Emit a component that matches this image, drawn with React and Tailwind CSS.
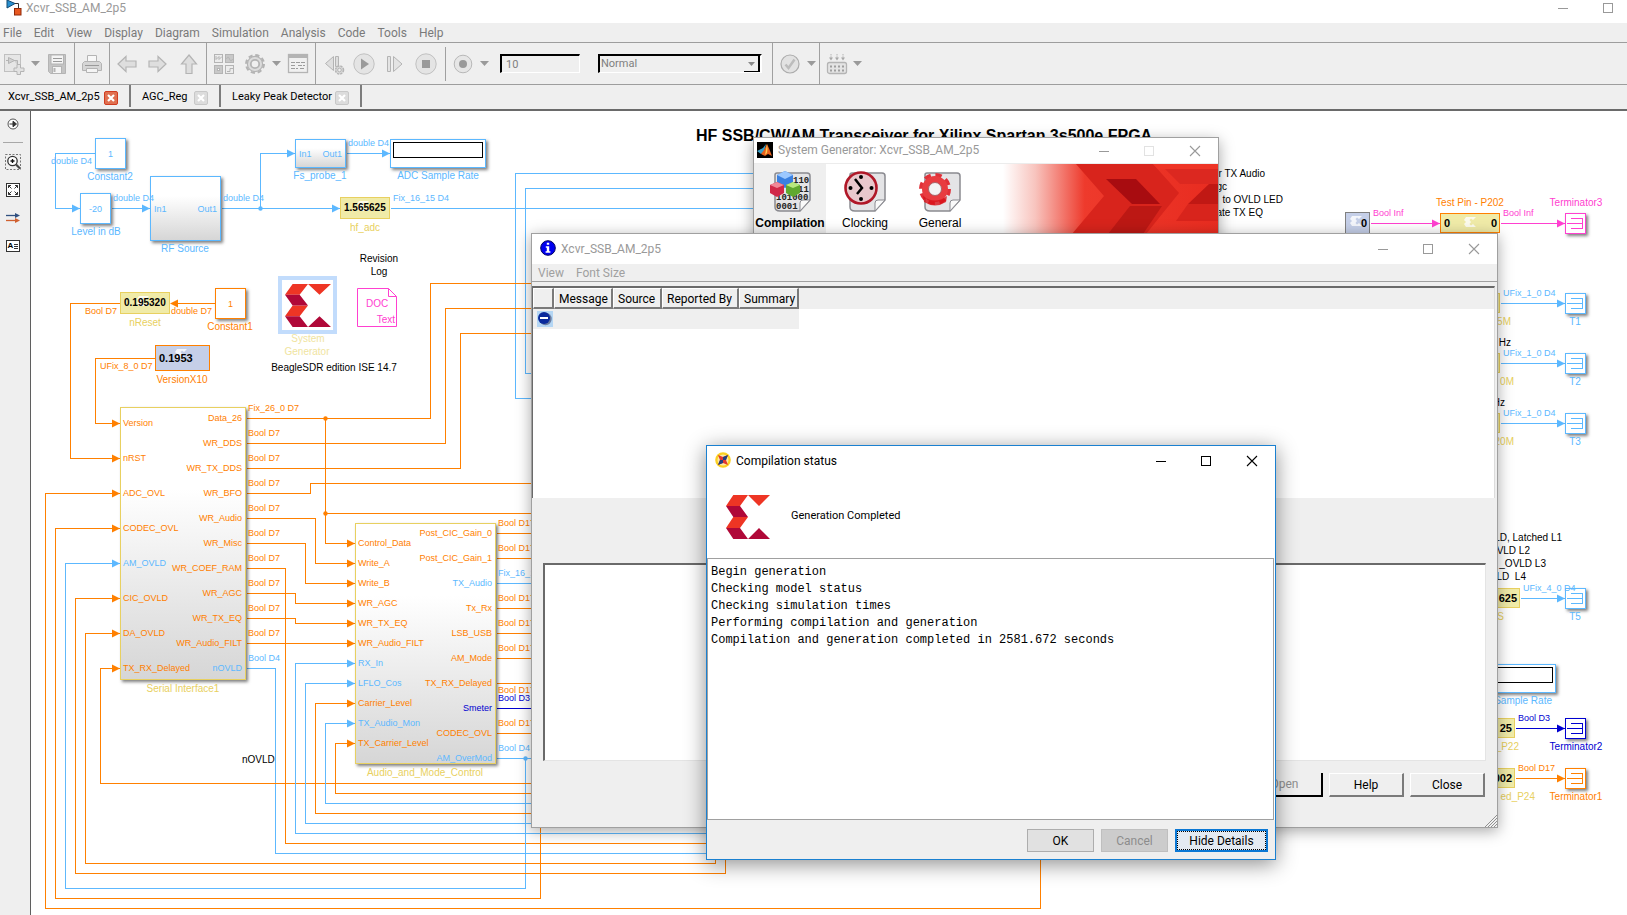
import React from "react";

/* ---------- palette ---------- */
const BLUE = "#5cb8ff";
const ORANGE = "#ff8000";
const YELLOW = "#e8d060";
const PALE = "#f0e4a0";
const PINK = "#ff40d0";
const NAVY = "#0000d0";
const BLACK = "#000000";

/* Diagram coordinates are window coordinates; the canvas starts here. */
const OX = 31;
const OY = 111;

/* ---------- small glyphs ---------- */
function XilinxMark({ className }) {
  return (
    <svg viewBox="0 0 44 44" preserveAspectRatio="none" className={className} aria-hidden="true">
      <path fill="#ee3524" d="M7.3 0H22L14 11H0zM7.3 22H22L14 33H0zM22 0H44L33 11z" />
      <path fill="#b00838" d="M0 11H14L22 22H7.3zM0 33H14L22 44H7.3zM33 33L44 44H22z" />
    </svg>
  );
}

function Caret() {
  return (
    <svg viewBox="0 0 9 5" className="h-[5px] w-[9px] shrink-0" aria-hidden="true">
      <path d="M0 0H9L4.5 5z" fill="#9a9a9a" />
    </svg>
  );
}

function CloseGlyph({ active }) {
  return (
    <svg viewBox="0 0 14 14" className="size-[14px]" aria-hidden="true">
      <rect x=".5" y=".5" width="13" height="13" rx="1.5" fill={active ? "#e07050" : "#dcdcdc"} stroke={active ? "#d03c20" : "#c8c8c8"} />
      <path d="M4 4l6 6M10 4l-6 6" stroke="#fff" strokeWidth="2.2" />
    </svg>
  );
}

function Minus({ color }) {
  return (
    <svg viewBox="0 0 12 12" className="size-3" aria-hidden="true" shapeRendering="crispEdges">
      <path d="M1 6.5h10" stroke={color} />
    </svg>
  );
}
function Box({ color }) {
  return (
    <svg viewBox="0 0 12 12" className="size-3" aria-hidden="true" shapeRendering="crispEdges">
      <rect x="1.5" y="1.5" width="9" height="9" fill="none" stroke={color} />
    </svg>
  );
}
function Cross({ color }) {
  return (
    <svg viewBox="0 0 12 12" className="size-3" aria-hidden="true">
      <path d="M1 1l10 10M11 1L1 11" stroke={color} strokeWidth="1.1" />
    </svg>
  );
}

function ToolIcon({ size = "size-[22px]", children }) {
  return (
    <svg viewBox="0 0 22 22" className={`${size} shrink-0`} fill="none" stroke="#b4b4b4" aria-hidden="true">
      {children}
    </svg>
  );
}

/* ---------- toolbar ---------- */
function ToolButton({ label, className = "", children }) {
  return (
    <button type="button" aria-label={label} title={label} className={`flex shrink-0 items-center justify-center ${className}`}>
      {children}
    </button>
  );
}

function Toolbar() {
  return (
    <div className="flex h-[42px] items-stretch border-b border-[#9d9d9d] bg-[#efefef]">
      <div className="flex w-[75px] items-center border-r border-[#a0a0a0] pl-[3px]">
        <ToolButton label="New model">
          <ToolIcon>
            <rect x="1.5" y="1.5" width="16" height="17" fill="#e6e6e6" stroke="#c0c0c0" />
            <path d="M3 7.5h3M5.5 4.5v6l6-3zM11 7.5h3.500v5" fill="#d0d0d0" />
            <path d="M14 11.500h3.500v3.500h3.500v3.500h-3.500v3h-3.500v-3h-3v-3.500h3z" fill="#e2e2e2" />
          </ToolIcon>
        </ToolButton>
        <ToolButton label="New options" className="ml-[6px]"><Caret /></ToolButton>
        <ToolButton label="Save" className="ml-[6px]">
          <ToolIcon>
            <path d="M2.500 1.500h17v19h-15l-2-2z" fill="#c4c4c4" />
            <rect x="5" y="2" width="12.500" height="9" fill="#f4f4f4" stroke="#b4b4b4" />
            <path d="M7 5.500h9M7 8.500h9" stroke="#9a9a9a" />
            <rect x="6.500" y="13.500" width="9" height="7" fill="#f4f4f4" />
            <path d="M8.500 15v4" strokeWidth="2" />
          </ToolIcon>
        </ToolButton>
      </div>
      <div className="flex w-[35px] items-center border-r border-[#a0a0a0] pl-[6px]">
        <ToolButton label="Print">
          <ToolIcon>
            <path d="M6.500 2.500h9v6h-9z" fill="#f8f8f8" />
            <path d="M3.500 8.500h15l2 2v7h-19v-7z" fill="#d6d6d6" />
            <path d="M5.500 15.500h11v4h-11z" fill="#f4f4f4" />
            <path d="M4 12.500h14" stroke="#9a9a9a" />
          </ToolIcon>
        </ToolButton>
      </div>
      <div className="flex w-[97px] items-center gap-[9px] border-r border-[#a0a0a0] pl-[6px]">
        <ToolButton label="Back">
          <ToolIcon><path d="M2 11l8-7.500v4.500h10v6H10v4.500z" fill="#dedede" strokeWidth="1.200" /></ToolIcon>
        </ToolButton>
        <ToolButton label="Forward">
          <ToolIcon><path d="M19 11l-8-7.500v4.500H2v6h9v4.500z" fill="#dedede" strokeWidth="1.200" /></ToolIcon>
        </ToolButton>
        <ToolButton label="Up to parent">
          <ToolIcon><path d="M11 2l7.500 9H14v9.500H8V11H3.500z" fill="#dedede" strokeWidth="1.200" /></ToolIcon>
        </ToolButton>
      </div>
      <div className="flex w-[109px] items-center border-r border-[#a0a0a0] pl-[6px]">
        <ToolButton label="Library browser">
          <ToolIcon>
            <rect x="1.500" y="1.500" width="8" height="8" fill="#ececec" />
            <rect x="12.500" y="1.500" width="8" height="8" fill="#c8c8c8" />
            <rect x="1.500" y="12.500" width="8" height="8" fill="#c8c8c8" />
            <rect x="12.500" y="12.500" width="8" height="8" fill="#ececec" />
            <path d="M3 3v3.500l3-3v3l3-3M13.500 6q1.500-4 3 0t3 0M14 18.500h3v-3h3" />
            <rect x="4.500" y="15.500" width="2" height="2" fill="#fff" />
          </ToolIcon>
        </ToolButton>
        <ToolButton label="Configuration parameters" className="ml-[9px]">
          <ToolIcon>
            <circle cx="11" cy="11" r="8.900" strokeWidth="2.200" strokeDasharray="4.200 2.790" />
            <circle cx="11" cy="11" r="7.600" fill="#dcdcdc" strokeWidth="1.200" />
            <circle cx="11" cy="11" r="4.200" fill="#efefef" strokeWidth="1.800" />
          </ToolIcon>
        </ToolButton>
        <ToolButton label="Configuration options" className="ml-[6px]"><Caret /></ToolButton>
        <ToolButton label="Model explorer" className="ml-[6px]">
          <ToolIcon>
            <rect x="1.500" y="1.500" width="19" height="18" fill="#f0f0f0" strokeWidth="1.300" />
            <path d="M2 3.500h18" strokeWidth="3" />
            <path d="M4 9.500h14M4 12.500h5m2 0h7M4 15.500h7m2 0h5" stroke="#9c9c9c" strokeDasharray="4 1" />
          </ToolIcon>
        </ToolButton>
      </div>
      <div className="flex flex-none items-center border-r border-[#a0a0a0] pl-2">
        <ToolButton label="Step back">
          <ToolIcon>
            <path d="M9.500 3.500v14L1.500 10.500zM11.500 3.500h3v10h-3z" fill="#dedede" />
            <circle cx="15.500" cy="17" r="4" fill="#d8d8d8" strokeWidth="1.500" strokeDasharray="2.200 1" />
            <circle cx="15.500" cy="17" r="1.800" fill="#f0f0f0" />
          </ToolIcon>
        </ToolButton>
        <ToolButton label="Run" className="ml-[7px]">
          <ToolIcon>
            <circle cx="11" cy="11" r="10.200" fill="#e4e4e4" stroke="#c0c0c0" />
            <path d="M8 5.500v11l8-5.500z" fill="#9a9a9a" stroke="none" />
          </ToolIcon>
        </ToolButton>
        <ToolButton label="Step forward" className="ml-[10px]">
          <ToolIcon>
            <path d="M2.500 3.500h3v15h-3zM8.500 3.500v15l8.500-7.500z" fill="#e4e4e4" />
          </ToolIcon>
        </ToolButton>
        <ToolButton label="Stop" className="ml-2">
          <ToolIcon>
            <circle cx="11" cy="11" r="10.200" fill="#e4e4e4" stroke="#c0c0c0" />
            <rect x="7" y="7" width="8" height="8" fill="#9a9a9a" stroke="none" />
          </ToolIcon>
        </ToolButton>
        <div className="ml-2 h-[34px] w-px bg-[#a0a0a0]" />
        <ToolButton label="Record" className="ml-[6px]">
          <ToolIcon>
            <circle cx="11" cy="11" r="8.800" fill="#e6e6e6" stroke="#b8b8b8" />
            <circle cx="11" cy="11" r="4" fill="#9a9a9a" stroke="none" />
          </ToolIcon>
        </ToolButton>
        <ToolButton label="Record options" className="ml-[6px]"><Caret /></ToolButton>
        <input
          aria-label="Stop time"
          defaultValue="10"
          className="ml-[11px] h-[19px] w-[80px] border-t-2 border-r border-b border-l-2 border-t-black border-r-white border-b-white border-l-black bg-[#efefef] pl-1 text-[11px] text-[#808080]"
        />
        <div className="relative ml-[18px] h-[19px] w-[164px]">
          <select
            aria-label="Simulation mode"
            className="block h-full w-full appearance-none border-t-2 border-r-2 border-b border-l-2 border-t-black border-r-white border-b-white border-l-black bg-[#efefef] pl-px text-[11px] leading-4 text-[#808080]"
          >
            <option>Normal</option>
          </select>
          <span className="pointer-events-none absolute top-[2px] right-[2px] flex h-[16px] w-[16px] items-center justify-center border-r-2 border-b border-black bg-[#efefef]">
            <svg viewBox="0 0 7 4" className="h-1 w-[7px]" aria-hidden="true"><path d="M0 0h7L3.500 4z" fill="#8a8a8a" /></svg>
          </span>
        </div>
        <div className="w-[10px]" />
      </div>
      <div className="flex w-[47px] items-center border-r border-[#a0a0a0] pl-[6px]">
        <ToolButton label="Check model">
          <ToolIcon>
            <circle cx="11" cy="11" r="9" fill="#e2e2e2" stroke="#acacac" strokeWidth="1.200" />
            <path d="M6.500 11.500l3 3.500 6-8.500" stroke="#bcbcbc" strokeWidth="2.500" />
          </ToolIcon>
        </ToolButton>
        <ToolButton label="Check options" className="ml-[6px]"><Caret /></ToolButton>
      </div>
      <div className="flex items-center pl-[6px]">
        <ToolButton label="Build model">
          <ToolIcon>
            <path d="M5 1v4M11 1v4M17 1v4" strokeDasharray="1.500 .8" />
            <path d="M3 4.500h4l-2 3zM9 4.500h4l-2 3zM15 4.500h4l-2 3z" fill="#a8a8a8" stroke="none" />
            <rect x="1.500" y="9.500" width="19" height="11" rx="2" fill="#e4e4e4" strokeWidth="1.300" />
            <path d="M4 13.500h14M4 17.500h14" stroke="#9e9e9e" strokeWidth="2" strokeDasharray="2 2" />
          </ToolIcon>
        </ToolButton>
        <ToolButton label="Build options" className="ml-[5px]"><Caret /></ToolButton>
      </div>
    </div>
  );
}

/* ---------- diagram ---------- */
const WIRES = [
  [BLUE, "95,153 55,153 55,208 80,208", "r"],
  [BLUE, "111,208 150,208", "r"],
  [BLUE, "221,208 340,208", "r"],
  [BLUE, "260,208 260,153 295,153", "r"],
  [BLUE, "346,153 390,153", "r"],
  [BLUE, "390,208 760,208"],
  [BLUE, "760,173 515,173 515,398 540,398"],
  [BLUE, "760,188 525,188 525,373 540,373"],
  [ORANGE, "215,303 170,303", "l"],
  [ORANGE, "120,303 70,303 70,458 120,458", "r"],
  [ORANGE, "155,358 95,358 95,423 120,423", "r"],
  [ORANGE, "246,418 430,418 430,283 540,283"],
  [ORANGE, "246,443 445,443 445,308 540,308"],
  [ORANGE, "246,468 460,468 460,333 540,333"],
  [ORANGE, "246,493 310,493 310,483 540,483"],
  [ORANGE, "325,418 325,543 355,543", "r"],
  [ORANGE, "325,513 540,513"],
  [ORANGE, "246,518 315,518 315,563 355,563", "r"],
  [ORANGE, "246,543 305,543 305,583 355,583", "r"],
  [ORANGE, "246,568 285,568 285,843 720,843"],
  [ORANGE, "246,593 295,593 295,603 355,603", "r"],
  [ORANGE, "246,618 295,618 295,623 355,623", "r"],
  [ORANGE, "246,643 355,643", "r"],
  [BLUE, "246,668 275,668 275,853 720,853"],
  [ORANGE, "1040,850 1040,908 45,908 45,493 120,493", "r"],
  [ORANGE, "540,820 540,898 55,898 55,528 120,528", "r"],
  [BLUE, "525,758 525,888 65,888 65,563 120,563", "r"],
  [ORANGE, "725,850 725,873 75,873 75,598 120,598", "r"],
  [ORANGE, "715,850 715,863 85,863 85,633 120,633", "r"],
  [ORANGE, "540,783 100,783 100,668 120,668", "r"],
  [BLUE, "720,833 295,833 295,663 355,663", "r"],
  [BLUE, "540,823 305,823 305,683 355,683", "r"],
  [ORANGE, "540,813 315,813 315,703 355,703", "r"],
  [BLUE, "540,803 325,803 325,723 355,723", "r"],
  [ORANGE, "540,793 335,793 335,743 355,743", "r"],
  [ORANGE, "496,533 540,533"],
  [ORANGE, "496,558 540,558"],
  [BLUE, "496,583 540,583"],
  [ORANGE, "496,608 540,608"],
  [ORANGE, "496,633 540,633"],
  [ORANGE, "496,658 540,658"],
  [ORANGE, "496,683 540,683"],
  [NAVY, "496,708 540,708"],
  [ORANGE, "496,733 540,733"],
  [BLUE, "496,758 540,758"],
  [PINK, "1370,223 1440,223", "r"],
  [PINK, "1500,223 1565,223", "r"],
  [BLUE, "1500,303 1565,303", "r"],
  [BLUE, "1500,363 1565,363", "r"],
  [BLUE, "1500,423 1565,423", "r"],
  [BLUE, "1520,598 1565,598", "r"],
  [NAVY, "1515,728 1565,728", "r"],
  [ORANGE, "1515,778 1565,778", "r"],
];

const DOTS = [
  [BLUE, 260, 208],
  [ORANGE, 325, 418],
  [ORANGE, 325, 513],
  [BLUE, 525, 758],
];

function Wires() {
  return (
    <svg className="absolute inset-0 h-full w-full" aria-hidden="true">
      {WIRES.map(([color, text, head], i) => {
        const pts = text.split(" ").map((p) => p.split(",").map(Number));
        const line = pts.map(([x, y]) => `${x - OX + 0.5},${y - OY + 0.5}`).join(" ");
        const [ex, ey] = pts[pts.length - 1];
        const tx = ex - OX;
        const ty = ey - OY + 0.5;
        const d = head === "l" ? 8 : -8;
        return (
          <g key={i}>
            <polyline points={line} fill="none" stroke={color} shapeRendering="crispEdges" />
            {head && <polygon points={`${tx},${ty} ${tx + d},${ty - 4} ${tx + d},${ty + 4}`} fill={color} />}
          </g>
        );
      })}
      {DOTS.map(([color, x, y], i) => (
        <circle key={i} cx={x - OX + 0.5} cy={y - OY + 0.5} r="2.2" fill={color} />
      ))}
    </svg>
  );
}

const ANCHOR = { start: "", middle: "-translate-x-1/2", end: "-translate-x-full" };
const SIZE = {
  sig: "text-[9px] leading-3",
  name: "text-[10px] leading-3",
  title: "text-[16px] leading-[18px] font-bold",
};

/* Free text on the canvas; y is the vertical centre of the line. */
function Label({ x, y, c = BLACK, s = "sig", a = "start", children }) {
  return (
    <span
      className={`absolute whitespace-pre ${SIZE[s]} ${ANCHOR[a]}`}
      style={{ left: x - OX, top: y - OY - (s === "title" ? 9 : 6), color: c }}
    >
      {children}
    </span>
  );
}

function Block({ x, y, w, h, c, fill = "bg-white", shadow = true, children }) {
  return (
    <div
      className={`absolute flex items-center border ${fill} ${shadow ? "shadow-[2px_2px_3px_rgba(0,0,0,0.5)]" : ""}`}
      style={{ left: x - OX, top: y - OY, width: w, height: h, borderColor: c, color: c }}
    >
      {children}
    </div>
  );
}

const GRADIENT = "bg-linear-to-b from-white from-30% to-[#d6d6d6]";
const YFILL = "bg-[#f0eba8]";
const BFILL = "bg-[#c5cfe8]";

function Constant({ x, y, c, value }) {
  return (
    <Block x={x} y={y} w={31} h={31} c={c}>
      <span className="w-full text-center text-[9px] leading-3">{value}</span>
    </Block>
  );
}

function Terminator({ y, c }) {
  return (
    <Block x={1565} y={y} w={21} h={21} c={c}>
      <svg viewBox="0 0 19 19" className="size-full" fill="none" stroke={c} shapeRendering="crispEdges" aria-hidden="true">
        <path d="M1 9.500h15M5 4.500h11v10h-11" />
      </svg>
    </Block>
  );
}

/* White watermark behind a gateway block's value. */
function FaintMark({ className = "left-[15px]" }) {
  return (
    <svg viewBox="0 0 14 12" className={`absolute top-[2px] h-3 w-[14px] ${className}`} aria-hidden="true">
      <path d="M3 1h10l-3 3-2-1.500L6.500 4 8 6 6.500 8 8 9.500 10 8l3 3H3L1 8l2-2-2-2z" fill="#fff" opacity=".8" />
    </svg>
  );
}

const VALUE = { 10: "text-[10px]", 11: "text-[11px]" };

function GatewayText({ left, right, size = 11 }) {
  return (
    <>
      {left && <span className={`absolute left-[3px] leading-3 font-bold text-black ${VALUE[size]}`}>{left}</span>}
      {right && <span className={`absolute right-[2px] leading-3 font-bold text-black ${VALUE[size]}`}>{right}</span>}
    </>
  );
}

const SERIAL_IN = ["Version", "nRST", "ADC_OVL", "CODEC_OVL", "AM_OVLD", "CIC_OVLD", "DA_OVLD", "TX_RX_Delayed"];
const SERIAL_OUT = ["Data_26", "WR_DDS", "WR_TX_DDS", "WR_BFO", "WR_Audio", "WR_Misc", "WR_COEF_RAM", "WR_AGC", "WR_TX_EQ", "WR_Audio_FILT", "nOVLD"];
const AUDIO_IN = [
  ["Control_Data", ORANGE], ["Write_A", ORANGE], ["Write_B", ORANGE], ["WR_AGC", ORANGE], ["WR_TX_EQ", ORANGE], ["WR_Audio_FILT", ORANGE],
  ["RX_In", BLUE], ["LFLO_Cos", BLUE], ["Carrier_Level", ORANGE], ["TX_Audio_Mon", BLUE], ["TX_Carrier_Level", ORANGE],
];
const AUDIO_OUT = [
  ["Post_CIC_Gain_0", ORANGE, "Bool D17", 523], ["Post_CIC_Gain_1", ORANGE, "Bool D17", 548], ["TX_Audio", BLUE, "Fix_16_15 D4", 573],
  ["Tx_Rx", ORANGE, "Bool D17", 598], ["LSB_USB", ORANGE, "Bool D17", 623], ["AM_Mode", ORANGE, "Bool D17", 648],
  ["TX_RX_Delayed", ORANGE, "Bool D17", 690], ["Smeter", NAVY, "Bool D3", 698], ["CODEC_OVL", ORANGE, "Bool D17", 723], ["AM_OverMod", BLUE, "Bool D4", 748],
];

function Diagram() {
  return (
    <div className="relative min-h-[804px] flex-1 overflow-hidden bg-white font-['Liberation_Sans',Arial,sans-serif]">
      <Wires />

      <Label x={696} y={136} s="title">HF SSB/CW/AM Transceiver for Xilinx Spartan 3s500e FPGA</Label>

      {/* RF front end */}
      <Constant x={95} y={138} c={BLUE} value="1" />
      <Label x={110} y={177} c={BLUE} s="name" a="middle">Constant2</Label>
      <Label x={51} y={161} c={BLUE}>double D4</Label>
      <Constant x={80} y={193} c={BLUE} value="-20" />
      <Label x={96} y={232} c={BLUE} s="name" a="middle">Level in dB</Label>
      <Block x={150} y={176} w={71} h={65} c={BLUE} fill={GRADIENT}>
        <span className="flex w-full justify-between px-[3px] text-[9px] leading-3"><span>In1</span><span>Out1</span></span>
      </Block>
      <Label x={113} y={198} c={BLUE}>double D4</Label>
      <Label x={185} y={249} c={BLUE} s="name" a="middle">RF Source</Label>
      <Label x={223} y={198} c={BLUE}>double D4</Label>
      <Block x={295} y={139} w={51} h={29} c={BLUE} fill={GRADIENT}>
        <span className="flex w-full justify-between px-[3px] text-[9px] leading-3"><span>In1</span><span>Out1</span></span>
      </Block>
      <Label x={320} y={176} c={BLUE} s="name" a="middle">Fs_probe_1</Label>
      <Label x={348} y={143} c={BLUE}>double D4</Label>
      <Block x={390} y={139} w={96} h={29} c={BLUE}>
        <span className="mx-[2px] mb-[7px] h-4 flex-1 border border-black bg-white" />
      </Block>
      <Label x={438} y={176} c={BLUE} s="name" a="middle">ADC Sample Rate</Label>
      <Block x={340} y={197} w={50} h={22} c={YELLOW} fill={YFILL} shadow={false}>
        <FaintMark />
        <GatewayText left="1.565625" size={10} />
      </Block>
      <Label x={365} y={228} c={YELLOW} s="name" a="middle">hf_adc</Label>
      <Label x={393} y={198} c={BLUE}>Fix_16_15 D4</Label>

      {/* reset and version */}
      <Block x={120} y={292} w={50} h={22} c={YELLOW} fill={YFILL} shadow={false}>
        <FaintMark />
        <GatewayText left="0.195320" size={10} />
      </Block>
      <Label x={145} y={323} c={YELLOW} s="name" a="middle">nReset</Label>
      <Label x={85} y={311} c={ORANGE}>Bool D7</Label>
      <Label x={171} y={311} c={ORANGE}>double D7</Label>
      <Constant x={215} y={288} c={ORANGE} value="1" />
      <Label x={230} y={327} c={ORANGE} s="name" a="middle">Constant1</Label>
      <Block x={155} y={345} w={55} h={26} c={ORANGE} fill={BFILL} shadow={false}>
        <FaintMark className="left-[18px]" />
        <GatewayText left="0.1953" />
      </Block>
      <Label x={182} y={380} c={ORANGE} s="name" a="middle">VersionX10</Label>
      <Label x={100} y={366} c={ORANGE}>UFix_8_0 D7</Label>

      {/* generator token and notes */}
      <div
        className="absolute flex items-center justify-center border-4 border-[#c2dcfc] bg-white"
        style={{ left: 278 - OX, top: 276 - OY, width: 59, height: 58 }}
      >
        <XilinxMark className="h-[43px] w-[46px]" />
      </div>
      <Label x={308} y={339} c={PALE} s="name" a="middle">System</Label>
      <Label x={307} y={352} c={PALE} s="name" a="middle">Generator</Label>
      <Label x={334} y={368} s="name" a="middle">BeagleSDR edition ISE 14.7</Label>
      <Label x={379} y={259} s="name" a="middle">Revision</Label>
      <Label x={379} y={272} s="name" a="middle">Log</Label>
      <svg viewBox="0 0 40 39" className="absolute h-[39px] w-10" style={{ left: 357 - OX, top: 288 - OY }} aria-hidden="true">
        <path d="M.5.5H31.500L39.500 8.500V38.500H.5zM31.500.5V8.500H39.500" fill="#fff" stroke={PINK} />
      </svg>
      <Label x={366} y={304} c={PINK} s="name">DOC</Label>
      <Label x={395} y={320} c={PINK} s="name" a="end">Text</Label>

      {/* serial interface */}
      <Block x={120} y={407} w={126} h={273} c={YELLOW} fill={GRADIENT} />
      {SERIAL_IN.map((t, i) => (
        <Label key={t} x={123} y={423 + i * 35} c={t === "AM_OVLD" ? BLUE : ORANGE}>{t}</Label>
      ))}
      {SERIAL_OUT.map((t, i) => (
        <React.Fragment key={t}>
          <Label x={242} y={418 + i * 25} c={t === "nOVLD" ? BLUE : ORANGE} a="end">{t}</Label>
          <Label x={248} y={408 + i * 25} c={t === "nOVLD" ? BLUE : ORANGE}>
            {i === 0 ? "Fix_26_0 D7" : t === "nOVLD" ? "Bool D4" : "Bool D7"}
          </Label>
        </React.Fragment>
      ))}
      <Label x={183} y={689} c={YELLOW} s="name" a="middle">Serial Interface1</Label>
      <Label x={242} y={760} s="name">nOVLD</Label>

      {/* audio and mode control */}
      <Block x={355} y={523} w={141} h={241} c={YELLOW} fill={GRADIENT} />
      {AUDIO_IN.map(([t, c], i) => (
        <Label key={t} x={358} y={543 + i * 20} c={c}>{t}</Label>
      ))}
      {AUDIO_OUT.map(([t, c, sig, sy], i) => (
        <React.Fragment key={t}>
          <Label x={492} y={533 + i * 25} c={c} a="end">{t}</Label>
          <Label x={498} y={sy} c={c}>{sig}</Label>
        </React.Fragment>
      ))}
      <Label x={425} y={773} c={YELLOW} s="name" a="middle">Audio_and_Mode_Control</Label>

      {/* notes beside the generator window */}
      <Label x={1265} y={174} s="name" a="end">r TX Audio</Label>
      <Label x={1227} y={187} s="name" a="end">gc</Label>
      <Label x={1283} y={200} s="name" a="end">to OVLD LED</Label>
      <Label x={1263} y={213} s="name" a="end">ate TX EQ</Label>

      {/* test pin chain */}
      <Block x={1345} y={212} w={25} h={22} c="#808080" fill={BFILL} shadow={false}>
        <FaintMark className="left-[3px]" />
        <GatewayText right="0" />
      </Block>
      <Label x={1373} y={213} c={PINK}>Bool Inf</Label>
      <Block x={1440} y={213} w={60} h={20} c={ORANGE} fill={YFILL} shadow={false}>
        <FaintMark className="left-[22px]" />
        <GatewayText left="0" right="0" />
      </Block>
      <Label x={1470} y={203} c={ORANGE} s="name" a="middle">Test Pin - P202</Label>
      <Label x={1503} y={213} c={PINK}>Bool Inf</Label>
      <Terminator y={213} c={PINK} />
      <Label x={1576} y={203} c={PINK} s="name" a="middle">Terminator3</Label>

      {/* band outputs */}
      {[["T1", 303, "5M"], ["T2", 363, "0M"], ["T3", 423, "20M"]].map(([t, y, m], i) => (
        <React.Fragment key={t}>
          <Block x={1460} y={y - 10} w={40} h={20} c={YELLOW} fill={YFILL} shadow={false} />
          <Label x={1503} y={y - 10} c={BLUE}>UFix_1_0 D4</Label>
          <Terminator y={y - 10} c={BLUE} />
          <Label x={1575} y={y + 19} c={BLUE} s="name" a="middle">{t}</Label>
          <Label x={i === 0 ? 1511 : 1514} y={y + 19} c={YELLOW} s="name" a="end">{m}</Label>
        </React.Fragment>
      ))}
      <Label x={1511} y={343} s="name" a="end">Hz</Label>
      <Label x={1505} y={403} s="name" a="end">Hz</Label>

      {/* overload flags */}
      <Label x={1562} y={538} s="name" a="end">LD, Latched L1</Label>
      <Label x={1530} y={551} s="name" a="end">VLD L2</Label>
      <Label x={1546} y={564} s="name" a="end">_OVLD L3</Label>
      <Label x={1526} y={577} s="name" a="end">LD  L4</Label>
      <Block x={1460} y={588} w={60} h={20} c={YELLOW} fill={YFILL} shadow={false}>
        <GatewayText right="625" />
      </Block>
      <Label x={1504} y={617} c={YELLOW} s="name" a="end">S</Label>
      <Terminator y={588} c={BLUE} />
      <Label x={1523} y={588} c={BLUE}>UFix_4_0 D4</Label>
      <Label x={1575} y={617} c={BLUE} s="name" a="middle">T5</Label>

      <Block x={1460} y={664} w={96} h={29} c={BLUE}>
        <span className="mx-[2px] mb-[7px] h-4 flex-1 border border-black bg-white" />
      </Block>
      <Label x={1552} y={701} c={BLUE} s="name" a="end">Sample Rate</Label>

      <Block x={1460} y={718} w={55} h={20} c={YELLOW} fill={YFILL} shadow={false}>
        <GatewayText right="25" />
      </Block>
      <Label x={1519} y={747} c={YELLOW} s="name" a="end">_P22</Label>
      <Label x={1518} y={718} c={NAVY}>Bool D3</Label>
      <Terminator y={718} c={NAVY} />
      <Label x={1576} y={747} c={NAVY} s="name" a="middle">Terminator2</Label>

      <Block x={1460} y={768} w={55} h={20} c={YELLOW} fill={YFILL} shadow={false}>
        <GatewayText right="002" />
      </Block>
      <Label x={1535} y={797} c={YELLOW} s="name" a="end">ed_P24</Label>
      <Label x={1518} y={768} c={ORANGE}>Bool D17</Label>
      <Terminator y={768} c={ORANGE} />
      <Label x={1576} y={797} c={ORANGE} s="name" a="middle">Terminator1</Label>
    </div>
  );
}

/* ---------- left palette ---------- */
function Palette() {
  const icon = "size-4";
  return (
    <nav aria-label="Palette" className="flex w-[31px] shrink-0 flex-col items-start border-r border-[#5f5f5f] bg-[#efefef] pt-[5px] pl-[5px]">
      <button type="button" aria-label="Hide browser" className="size-4">
        <svg viewBox="0 0 16 16" className={icon} fill="none">
          <circle cx="8" cy="8" r="5" fill="#fff" stroke="#555" />
          <path d="M4.500 8H8V5.200L11.500 8 8 10.800V8" fill="#333" stroke="#333" />
        </svg>
      </button>
      <div className="mt-[10px] -ml-[2px] h-px w-[20px] bg-[#a8a8a8]" />
      <button type="button" aria-label="Zoom" className="mt-[11px] size-4">
        <svg viewBox="0 0 16 16" className={icon} fill="none">
          <rect x=".5" y=".5" width="15" height="15" stroke="#777" strokeDasharray="2 1.500" />
          <circle cx="7.500" cy="7" r="4.700" fill="#fff" stroke="#333" strokeWidth="1.300" />
          <path d="M5.500 7h4M7.500 5v4" stroke="#111" strokeWidth="1.300" />
          <path d="M11 10.500l4 4" stroke="#444" strokeWidth="2.200" />
        </svg>
      </button>
      <button type="button" aria-label="Fit to view" className="mt-3 size-4">
        <svg viewBox="0 0 16 16" className={icon} fill="none" stroke="#333">
          <rect x="1.500" y="1.500" width="13" height="13" fill="#fff" />
          <path d="M3.500 6V3.500H6M3.500 3.500l3 3M10 3.500h2.500V6M12.500 3.500l-3 3M3.500 10v2.500H6M3.500 12.500l3-3M12.500 10v2.500H10M12.500 12.500l-3-3" />
        </svg>
      </button>
      <button type="button" aria-label="Sample time colours" className="mt-3 size-4">
        <svg viewBox="0 0 16 16" className={icon} fill="none">
          <path d="M1 5.500h11" stroke="#305080" strokeWidth="1.300" />
          <path d="M10 3l5 2.500L10 8z" fill="#305080" />
          <path d="M1 10.500h11" stroke="#d06030" strokeWidth="1.300" />
          <path d="M10 8l5 2.500L10 13z" fill="#d06030" />
        </svg>
      </button>
      <button type="button" aria-label="Annotation" className="mt-3 flex size-4 items-center justify-center">
        <span className="flex h-3 w-[14px] items-center justify-center gap-px border border-[#333] bg-white font-['Liberation_Sans',sans-serif] text-[8px] leading-none font-bold text-black">
          A
          <svg viewBox="0 0 4 7" className="h-[7px] w-1" stroke="#333" shapeRendering="crispEdges"><path d="M0 1.500h4M0 3.500h4M0 5.500h4" /></svg>
        </span>
      </button>
    </nav>
  );
}

/* ---------- windows ---------- */
function Controls({ color, boxColor = color }) {
  return (
    <div className="ml-auto flex">
      <button type="button" aria-label="Minimize" className="flex w-[45px] items-center justify-center"><Minus color={color} /></button>
      <button type="button" aria-label="Maximize" className="flex w-[45px] items-center justify-center"><Box color={boxColor} /></button>
      <button type="button" aria-label="Close" className="flex w-[47px] items-center justify-center"><Cross color={color} /></button>
    </div>
  );
}

function Page({ children }) {
  return (
    <svg viewBox="0 0 42 42" className="size-[42px]" fill="none" aria-hidden="true">
      <path d="M8 3h30q3 0 3 3v24l-10 11H11q-5 0-5-4V5q0-2 2-2z" fill="#e4e4e6" stroke="#8a8a90" strokeWidth="1.500" />
      <path d="M41 30H34q-3 0-3 3v8z" fill="#fafafa" stroke="#8a8a90" />
      {children}
    </svg>
  );
}

function GeneratorWindow() {
  return (
    <section className="absolute top-[137px] left-[753px] h-[120px] w-[466px] overflow-hidden border border-[#a0a0a0] bg-white shadow-[0_4px_14px_rgba(0,0,0,0.35)]">
      <header className="flex h-[25px] items-stretch text-xs text-[#999]">
        <svg viewBox="0 0 16 16" className="mt-1 ml-[3px] size-4" aria-hidden="true">
          <rect width="16" height="16" fill="#000" />
          <path d="M0 9l6-3 3-4-2 8-3 2z" fill="#3aa0c8" />
          <path d="M4 12l3-4 3-6q2 4 5 12l-4-2-3 2z" fill="#e8601c" />
          <path d="M10 2q1 5 0 9l-2 2z" fill="#ffc850" />
        </svg>
        <h2 className="ml-[5px] leading-[25px]">System Generator: Xcvr_SSB_AM_2p5</h2>
        <Controls color="#999" boxColor="#e2e2e2" />
      </header>
      <div className="flex border-t border-[#ececec] font-['Liberation_Sans',Arial,sans-serif] text-xs text-black">
        <button type="button" className="flex h-[92px] w-[72px] flex-col items-center bg-[#efefef] pt-[6px] font-bold">
          <Page>
            <g fill="#222" fontSize="9" fontFamily="Liberation Mono, monospace" stroke="none">
              <text x="24" y="13">110</text>
              <text x="29" y="22">11</text>
              <text x="7" y="30">101000</text>
              <text x="7" y="39">0001</text>
            </g>
            <path d="M8 5l8-4 8 4v9l-8 4-8-4z" fill="#3a80e0" /><path d="M8 5l8 4 8-4-8-4z" fill="#9cc8ff" />
            <path d="M1 15l7-3 7 3v8l-7 4-7-4z" fill="#d02848" /><path d="M1 15l7 3 7-3-7-3z" fill="#f08898" />
            <path d="M17 15l7-3 7 3v8l-7 4-7-4z" fill="#60a830" /><path d="M17 15l7 3 7-3-7-3z" fill="#b8e880" />
          </Page>
          <span className="mt-[3px]">Compilation</span>
        </button>
        <button type="button" className="flex h-[92px] w-[78px] flex-col items-center pt-[6px]">
          <Page>
            <circle cx="17" cy="18" r="15.500" fill="#e8c8cc" stroke="#b01828" strokeWidth="2.600" />
            <path d="M11 9l7 9-5 6" stroke="#000" strokeWidth="2.500" />
            <g fill="#000"><circle cx="17" cy="7" r="2" /><circle cx="17" cy="29" r="2" /><circle cx="6.500" cy="18" r="2" /><circle cx="27.500" cy="18" r="2" /></g>
          </Page>
          <span className="mt-[3px]">Clocking</span>
        </button>
        <button type="button" className="flex h-[92px] w-[72px] flex-col items-center pt-[6px]">
          <Page>
            <circle cx="16" cy="19" r="13.500" stroke="#e03038" strokeWidth="5" strokeDasharray="6.100 4.500" />
            <circle cx="16" cy="19" r="9.500" stroke="#e83c40" strokeWidth="7" />
            <path d="M4 26q12 9 24 0l-1 6q-11 7-22 0z" fill="#d81018" opacity=".8" />
            <circle cx="16" cy="19" r="6.500" fill="#f4f4f4" stroke="#a86468" />
          </Page>
          <span className="mt-[3px]">General</span>
        </button>
        <svg viewBox="0 0 215 70" preserveAspectRatio="none" className="ml-auto h-[70px] w-[215px]" aria-hidden="true">
          <defs>
            <linearGradient id="banner">
              <stop offset="0" stopColor="#fff" />
              <stop offset=".15" stopColor="#f8c4be" />
              <stop offset=".38" stopColor="#ee3a2c" />
              <stop offset="1" stopColor="#e82c20" />
            </linearGradient>
          </defs>
          <rect width="215" height="70" fill="url(#banner)" />
          <path d="M73 0h77l26 29-33 41H69l32-38z" fill="#d8241c" />
          <path d="M150 0h65v5h-60z" fill="#ee3426" />
          <path d="M103 15h30l24 25h-28z" fill="#a80c10" />
          <path d="M127 42h32l-19 28h-35z" fill="#bc1814" />
          <path d="M206 20h9v20h-30z" fill="#c01814" />
          <path d="M185 40h30v17h-42z" fill="#d8241c" />
          <path d="M162 5h53v15h-38z" fill="#dc2820" />
        </svg>
      </div>
    </section>
  );
}

const RAISED = "border-t border-l border-r-2 border-b-2 border-t-white border-l-white border-r-[#7a7a7a] border-b-[#7a7a7a] bg-[#efefef]";

function MessageWindow() {
  return (
    <section className="absolute top-[233px] left-[531px] flex h-[595px] w-[967px] flex-col border border-[#a0a0a0] bg-[#efefef] shadow-[0_3px_14px_rgba(0,0,0,0.35)]">
      <header className="flex h-[30px] items-stretch bg-white text-xs text-[#999]">
        <svg viewBox="0 0 16 16" className="mt-[6px] ml-2 size-4" aria-hidden="true">
          <circle cx="8" cy="8" r="7.300" fill="#0000f0" stroke="#000060" />
          <path d="M6.800 2.800h2.400v2H6.800zM5.800 6.200h3.400v5h1.200v1.500H5.600v-1.500h1.200V7.700h-1z" fill="#fff" />
        </svg>
        <h2 className="ml-[5px] leading-[30px]">Xcvr_SSB_AM_2p5</h2>
        <Controls color="#999" />
      </header>
      <nav className="flex h-[18px] shrink-0 gap-3 border-b border-[#a0a0a0] pl-[6px] text-xs leading-[18px] text-[#a0a0a0]">
        <button type="button">View</button>
        <button type="button">Font Size</button>
      </nav>
      <div className="mt-1 mr-[2px] h-[212px] shrink-0 border-t-2 border-r border-l border-t-[#6a6a6a] border-r-[#dcdcdc] border-l-[#6a6a6a] bg-white">
        <div className="bg-[#efefef]">
          <table className="table-fixed border-collapse text-xs text-black">
            <colgroup>
              <col className="w-[21px]" /><col className="w-[59px]" /><col className="w-[49px]" /><col className="w-[77px]" /><col className="w-[60px]" />
            </colgroup>
            <thead>
              <tr>
                {["", "Message", "Source", "Reported By", "Summary"].map((h) => (
                  <th key={h} className="h-[21px] p-0 font-normal">
                    <div className={`h-[21px] pl-1 text-left leading-5 whitespace-nowrap ${RAISED}`}>{h}</div>
                  </th>
                ))}
              </tr>
            </thead>
          </table>
        </div>
        <div className="flex h-[20px] w-[266px] items-center bg-[#efefef] pl-[4px]">
          <svg viewBox="0 0 16 16" className="size-4" aria-hidden="true">
            <rect width="16" height="16" fill="#b4d6f4" />
            <circle cx="8.500" cy="8" r="6.200" fill="#6a7ca0" />
            <circle cx="7" cy="7" r="6" fill="#0a2a9c" />
            <path d="M3 7h8" stroke="#fff" strokeWidth="2" />
          </svg>
        </div>
      </div>
      <div className="mt-[65px] mr-[11px] mb-3 ml-[11px] flex-1 border-t-2 border-r border-b border-l-2 border-t-[#6a6a6a] border-r-[#e4e4e4] border-b-[#e4e4e4] border-l-[#6a6a6a] bg-white" />
      <div className="mr-[12px] mb-[30px] flex justify-end gap-[6px] text-xs text-black">
        <button type="button" className="h-6 w-[75px] border-r-2 border-b-2 border-black bg-[#efefef] text-[#909090]">Open</button>
        <button type="button" className={`h-6 w-[75px] ${RAISED}`}>Help</button>
        <button type="button" className={`h-6 w-[75px] ${RAISED}`}>Close</button>
      </div>
      <svg viewBox="0 0 12 12" className="absolute right-0 bottom-0 size-3" stroke="#909090" aria-hidden="true">
        <path d="M0 12L12 0M3 12l9-9M6 12l6-6M9 12l3-3" />
      </svg>
    </section>
  );
}

const LOG = [
  "Begin generation",
  "Checking model status",
  "Checking simulation times",
  "Performing compilation and generation",
  "Compilation and generation completed in 2581.672 seconds",
];

function StatusDialog() {
  return (
    <section
      role="dialog"
      aria-label="Compilation status"
      className="absolute top-[445px] left-[706px] flex h-[415px] w-[570px] flex-col border border-[#1a80d0] bg-white shadow-[0_4px_20px_rgba(0,0,0,0.45)]"
    >
      <header className="flex h-[29px] items-stretch text-xs text-black">
        <svg viewBox="0 0 16 16" className="mt-[6px] ml-2 size-4" aria-hidden="true">
          <circle cx="8" cy="8" r="7.800" fill="#fcd020" />
          <circle cx="8" cy="8" r="5.500" fill="#fae8a8" />
          <path d="M3 3l5 2 5-2-2 5 2 5-5-2-5 2 2-5z" fill="#e03830" />
          <path d="M13 3l-5 2v3l3 0zM3 13l2-5h3v3z" fill="#204080" />
        </svg>
        <h2 className="ml-[5px] leading-[30px]">Compilation status</h2>
        <Controls color="#000" />
      </header>
      <div className="flex h-[83px] items-center pl-[19px]">
        <XilinxMark className="size-11" />
        <p className="ml-[21px] text-[11px] text-black">Generation Completed</p>
      </div>
      <pre className="mr-px flex-1 border border-[#a0a0a0] pt-[5px] pl-[3px] font-['Liberation_Mono','Courier_New',monospace] text-xs leading-[17px] text-black">
        {LOG.join("\n")}
      </pre>
      <footer className="flex h-[39px] shrink-0 items-center justify-end gap-[7px] bg-[#efefef] pt-[2px] pr-[7px] text-xs text-black">
        <button type="button" className="h-[23px] w-[67px] border border-[#adadad] bg-[#e1e1e1]">OK</button>
        <button type="button" disabled className="h-[23px] w-[67px] border border-[#bfbfbf] bg-[#cccccc] text-[#8c8c8c]">Cancel</button>
        <button type="button" className="h-[23px] w-[93px] border-2 border-[#0c78d4] bg-[#e3eaf2]">
          <span className="flex h-full items-center justify-center border border-dotted border-black">Hide Details</span>
        </button>
      </footer>
    </section>
  );
}

/* ---------- application ---------- */
const MENUS = ["File", "Edit", "View", "Display", "Diagram", "Simulation", "Analysis", "Code", "Tools", "Help"];
const TABS = [["Xcvr_SSB_AM_2p5", "w-[131px] pl-2", true], ["AGC_Reg", "w-[90px] pl-[11px]"], ["Leaky Peak Detector", "w-[141px] pl-[11px]"]];

export default function App() {
  return (
    <div className="relative flex min-h-screen flex-col overflow-hidden bg-white font-[Roboto,'Noto_Sans',sans-serif]">
      <header className="flex h-[23px] items-start bg-white">
        <svg viewBox="0 0 16 16" className="ml-[6px] size-4" aria-hidden="true">
          <path d="M1 0l8 3.500L1 8z" fill="#2890d0" stroke="#104870" />
          <path d="M9 3.500h3.500V8" fill="none" stroke="#333" />
          <rect x="8.500" y="8.500" width="6.500" height="6.500" fill="#e85820" stroke="#902808" />
        </svg>
        <h1 className="ml-1 text-xs leading-4 text-[#999]">Xcvr_SSB_AM_2p5</h1>
        <div className="ml-auto flex gap-[33px] pt-[2px] pr-[13px]">
          <button type="button" aria-label="Minimize"><Minus color="#999" /></button>
          <button type="button" aria-label="Maximize"><Box color="#999" /></button>
        </div>
      </header>
      <nav aria-label="Menu" className="flex h-[20px] gap-3 border-b border-[#9d9d9d] bg-[#efefef] pl-[3px] text-xs leading-5 text-[#7a7a7a]">
        {MENUS.map((m) => (
          <button key={m} type="button">{m}</button>
        ))}
      </nav>
      <Toolbar />
      <div role="tablist" className="flex h-[26px] items-start border-b-2 border-[#6a6a6a] bg-[#efefef] text-[11px] text-black">
        {TABS.map(([t, cls, on]) => (
          <div key={t} className={`flex h-[22px] items-center justify-between border-r-2 border-[#7c7c7c] pt-[3px] pr-[11px] ${cls}`}>
            <button type="button" role="tab" aria-selected={!!on} className="whitespace-nowrap">{t}</button>
            <button type="button" aria-label={`Close ${t}`}><CloseGlyph active={on} /></button>
          </div>
        ))}
      </div>
      <main className="flex flex-1 items-stretch">
        <Palette />
        <Diagram />
      </main>
      <GeneratorWindow />
      <MessageWindow />
      <StatusDialog />
    </div>
  );
}
